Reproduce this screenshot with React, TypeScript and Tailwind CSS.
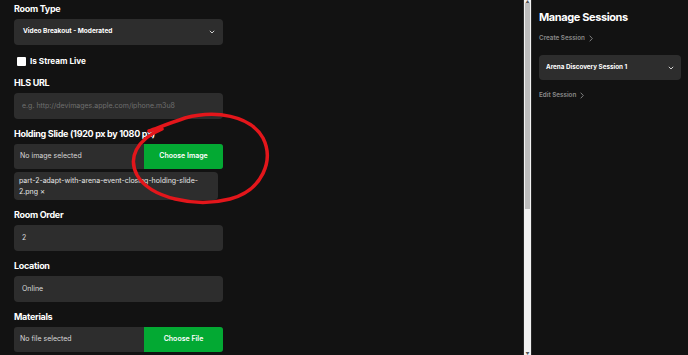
import React from "react";

type FieldProps = {
    label: string;
    children: React.ReactNode;
};

function Field({ label, children }: FieldProps) {
    return (
        <div className="flex flex-col gap-[3px]">
            <h3 className="text-[9px] font-bold tracking-[-0.3px] text-white leading-[14px]">{label}</h3>
            {children}
        </div>
    );
}

function Chevron() {
    return (
        <svg width="6" height="4" viewBox="0 0 6 4" fill="none">
            <path d="M0.8 0.8l2.2 2.2 2.2-2.2" stroke="#cfcfcf" strokeWidth="1" />
        </svg>
    );
}

function LinkArrow() {
    return (
        <svg width="4" height="7" viewBox="0 0 4 7" fill="none">
            <path d="M0.7 0.7l2.6 2.8-2.6 2.8" stroke="#8a8a8a" strokeWidth="0.9" />
        </svg>
    );
}

export default function App() {
    return (
        <div
            className="flex w-[688px] h-[355px] overflow-hidden bg-[#121212] text-white"
            style={{ fontFamily: "Inter, 'Noto Sans', sans-serif" }}
        >
            {/* form column */}
            <div className="relative w-[523px] shrink-0 pl-[14px] pt-[2px] flex flex-col gap-[8px]">
                <Field label="Room Type">
                    <div className="w-[209px] h-[26px] rounded-[4px] bg-[#2d2d2d] flex items-center justify-between pl-[9px] pr-[8px]">
                        <span className="text-[6.5px] font-bold text-white">Video Breakout - Moderated</span>
                        <Chevron />
                    </div>
                </Field>

                <label className="mt-[1px] h-[14px] flex items-center gap-[4px] pl-[3px]">
                    <span className="w-[9px] h-[9px] bg-white rounded-[1px]" />
                    <span className="text-[8.2px] font-bold text-white">Is Stream Live</span>
                </label>

                <Field label="HLS URL">
                    <div className="w-[209px] h-[26px] rounded-[4px] bg-[#2d2d2d] flex items-center pl-[8px]">
                        <span className="text-[7px] text-[#6f6f6f]">e.g. http://devimages.apple.com/iphone.m3u8</span>
                    </div>
                </Field>

                <Field label="Holding Slide (1920 px by 1080 px)">
                    <div className="w-[209px] h-[25px] rounded-[3px] bg-[#2d2d2d] flex overflow-hidden">
                        <span className="w-[130px] pl-[6px] flex items-center text-[7px] text-[#d8d8d8]">No image selected</span>
                        <button className="flex-1 bg-[#03a933] text-[7px] font-semibold text-white">Choose Image</button>
                    </div>
                    <div className="w-[204px] rounded-[4px] bg-[#2d2d2d] px-[5px] py-[3px] text-[7px] leading-[11px] text-[#e6e6e6] whitespace-nowrap">
                        part-2-adapt-with-arena-event-closing-holding-slide-
                        <br />
                        2.png <span className="text-[6px]">✕</span>
                    </div>
                </Field>

                <Field label="Room Order">
                    <div className="w-[209px] h-[26px] rounded-[4px] bg-[#2d2d2d] flex items-center pl-[8px]">
                        <span className="text-[7px] text-[#dcdcdc]">2</span>
                    </div>
                </Field>

                <Field label="Location">
                    <div className="w-[209px] h-[26px] rounded-[4px] bg-[#2d2d2d] flex items-center pl-[8px]">
                        <span className="text-[7px] text-[#dcdcdc]">Online</span>
                    </div>
                </Field>

                <Field label="Materials">
                    <div className="w-[209px] h-[25px] rounded-[3px] bg-[#2d2d2d] flex overflow-hidden">
                        <span className="w-[130px] pl-[6px] flex items-center text-[7px] text-[#d8d8d8]">No file selected</span>
                        <button className="flex-1 bg-[#03a933] text-[7px] font-semibold text-white">Choose File</button>
                    </div>
                </Field>

                {/* red annotation circle */}
                <svg
                    className="absolute left-0 top-0 pointer-events-none"
                    width="523"
                    height="355"
                    viewBox="0 0 523 355"
                    fill="none"
                >
                    <path
                        d="M149 131 C160 127 170 123 185 118 C215 110 250 115 263 138 C274 160 263 190 230 199 C195 208 150 198 137 175 C128 158 136 140 162 129"
                        stroke="#e3161b"
                        strokeWidth="3.5"
                        strokeLinecap="round"
                    />
                </svg>
            </div>

            {/* scrollbar */}
            <div className="w-[9px] shrink-0 border-l border-r border-[#2a2a2a] bg-[#f1f1f1] flex flex-col">
                <div className="h-[3px] text-[4px] leading-[3px] text-center text-[#555]">▲</div>
                <div className="h-[206px] bg-[#bdbdbd] mx-[1px]" />
                <div className="flex-1" />
                <div className="h-[3px] text-[4px] leading-[3px] text-center text-[#555]">▼</div>
            </div>

            {/* sessions sidebar */}
            <div className="flex-1 pl-[7px] pr-[7px] pt-[11px] flex flex-col bg-[#121212]">
                <h2 className="text-[11px] font-bold tracking-[-0.4px] text-white leading-[13px]">Manage Sessions</h2>
                <div className="mt-[10px] h-[9px] flex items-center gap-[4px] text-[6.3px] font-semibold text-[#8a8a8a]">
                    Create Session <LinkArrow />
                </div>
                <div className="mt-[12px] h-[25px] w-[142px] rounded-[4px] bg-[#2d2d2d] flex items-center justify-between pl-[7px] pr-[7px]">
                    <span className="text-[6.3px] font-bold text-white">Arena Discovery Session 1</span>
                    <Chevron />
                </div>
                <div className="mt-[11px] h-[9px] flex items-center gap-[4px] text-[6.3px] font-semibold text-[#8a8a8a]">
                    Edit Session <LinkArrow />
                </div>
            </div>
        </div>
    );
}
